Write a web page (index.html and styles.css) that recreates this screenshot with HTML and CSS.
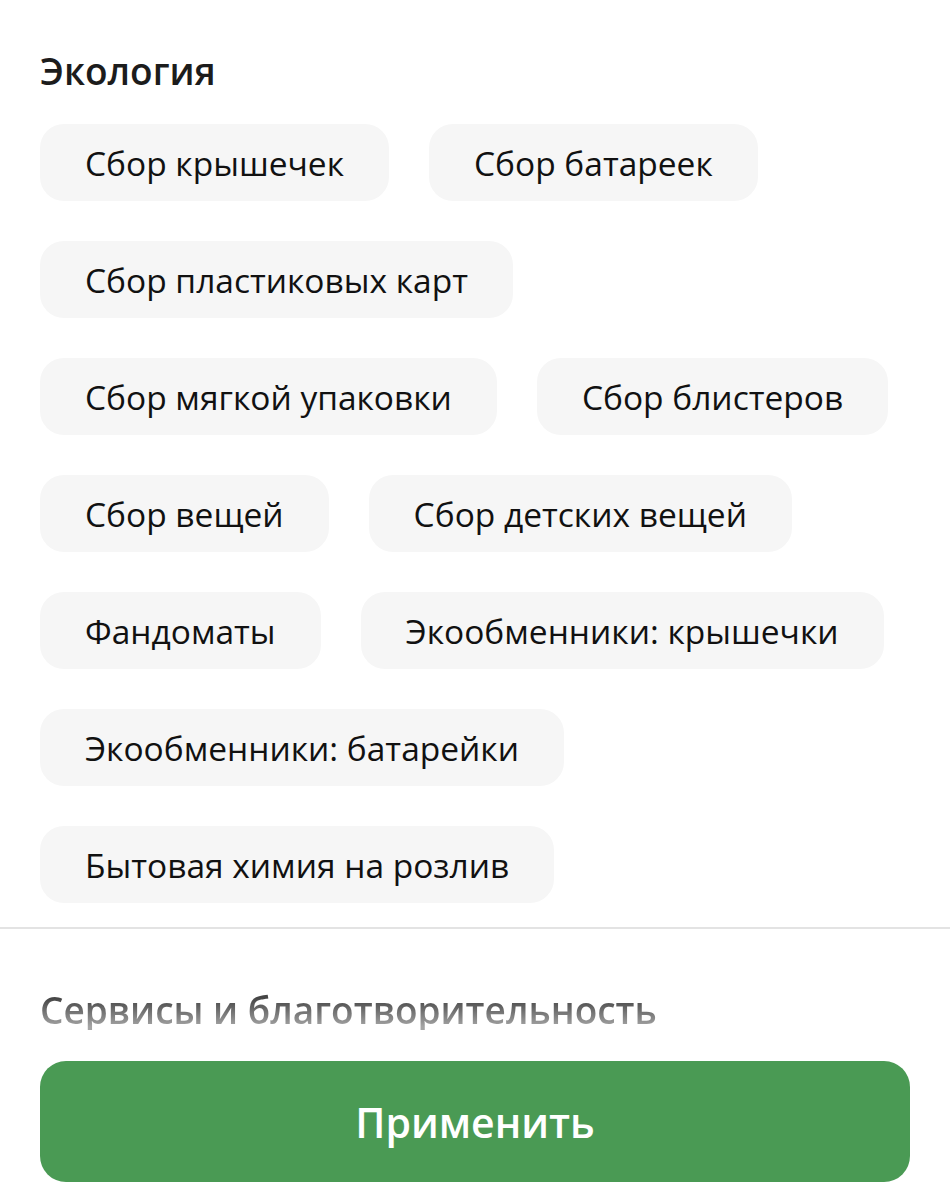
FILE: index.html
```html
<!DOCTYPE html>
<html lang="ru">
<head>
<meta charset="utf-8">
<title>Фильтры</title>
<link rel="stylesheet" href="styles.css">
</head>
<body>
<main class="sheet">
  <section class="group">
    <h2 class="group-title">Экология</h2>
    <div class="chips">
      <button class="chip">Сбор крышечек</button>
      <button class="chip">Сбор батареек</button>
      <button class="chip">Сбор пластиковых карт</button>
      <button class="chip">Сбор мягкой упаковки</button>
      <button class="chip">Сбор блистеров</button>
      <button class="chip">Сбор вещей</button>
      <button class="chip">Сбор детских вещей</button>
      <button class="chip">Фандоматы</button>
      <button class="chip">Экообменники: крышечки</button>
      <button class="chip">Экообменники: батарейки</button>
      <button class="chip">Бытовая химия на розлив</button>
    </div>
  </section>
  <hr class="divider">
  <section class="group group-next">
    <h2 class="group-title faded">Сервисы и благотворительность</h2>
  </section>
  <div class="footer">
    <button class="apply">Применить</button>
  </div>
</main>
</body>
</html>
```

FILE: styles.css
```css
* { box-sizing: border-box; }
html, body { margin: 0; padding: 0; background: #ffffff; }
body {
  font-family: "Open Sans", "Noto Sans", sans-serif;
  color: #111111;
  width: 950px;
  height: 1200px;
  overflow: hidden;
}
.sheet { display: flex; flex-direction: column; }
.group { padding: 51px 40px 0; }
.group-title {
  margin: 0;
  font-size: 37px;
  line-height: 40px;
  font-weight: 600;
  color: #1c1c1c;
}
.chips {
  display: flex;
  flex-wrap: wrap;
  gap: 40px;
  margin-top: 33px;
}
.chip {
  height: 77px;
  padding: 0 45px;
  border: 0;
  border-radius: 24px;
  background: #f6f6f6;
  font-family: inherit;
  font-size: 33.5px;
  font-weight: 400;
  color: #111111;
  display: flex;
  align-items: center;
  justify-content: center;
  white-space: nowrap;
}
.divider {
  margin: 24px 0 0;
  border: 0;
  height: 2px;
  background: #e3e3e3;
}
.group-next { padding-top: 61px; }
.faded {
  background: linear-gradient(180deg, #454545 20%, #a5a5a5 92%);
  -webkit-background-clip: text;
  background-clip: text;
  color: transparent;
  width: max-content;
}
.footer { padding: 31px 40px 0; }
.apply {
  width: 100%;
  height: 121px;
  border: 0;
  border-radius: 26px;
  background: #4a9a54;
  color: #ffffff;
  font-family: inherit;
  font-size: 41px;
  font-weight: 600;
}
```
